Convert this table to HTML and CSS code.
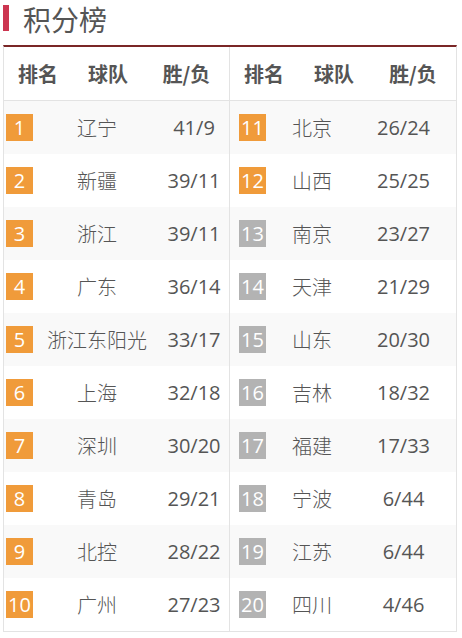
FILE: index.html
```html
<!DOCTYPE html>
<html lang="zh">
<head>
<meta charset="utf-8">
<link rel="stylesheet" href="styles.css">
</head>
<body>
<div class="title"><span class="bar"></span><h1>积分榜</h1></div>
<div class="board">
  <div class="half left">
    <div class="head"><span>排名</span><span>球队</span><span>胜/负</span></div>
    <div class="row"><span class="rank"><i class="badge hi">1</i></span><span class="team">辽宁</span><span class="score">41/9</span></div>
    <div class="row"><span class="rank"><i class="badge hi">2</i></span><span class="team">新疆</span><span class="score">39/11</span></div>
    <div class="row"><span class="rank"><i class="badge hi">3</i></span><span class="team">浙江</span><span class="score">39/11</span></div>
    <div class="row"><span class="rank"><i class="badge hi">4</i></span><span class="team">广东</span><span class="score">36/14</span></div>
    <div class="row"><span class="rank"><i class="badge hi">5</i></span><span class="team">浙江东阳光</span><span class="score">33/17</span></div>
    <div class="row"><span class="rank"><i class="badge hi">6</i></span><span class="team">上海</span><span class="score">32/18</span></div>
    <div class="row"><span class="rank"><i class="badge hi">7</i></span><span class="team">深圳</span><span class="score">30/20</span></div>
    <div class="row"><span class="rank"><i class="badge hi">8</i></span><span class="team">青岛</span><span class="score">29/21</span></div>
    <div class="row"><span class="rank"><i class="badge hi">9</i></span><span class="team">北控</span><span class="score">28/22</span></div>
    <div class="row"><span class="rank"><i class="badge hi">10</i></span><span class="team">广州</span><span class="score">27/23</span></div>
  </div>
  <div class="half right">
    <div class="head"><span>排名</span><span>球队</span><span>胜/负</span></div>
    <div class="row"><span class="rank"><i class="badge hi">11</i></span><span class="team">北京</span><span class="score">26/24</span></div>
    <div class="row"><span class="rank"><i class="badge hi">12</i></span><span class="team">山西</span><span class="score">25/25</span></div>
    <div class="row"><span class="rank"><i class="badge lo">13</i></span><span class="team">南京</span><span class="score">23/27</span></div>
    <div class="row"><span class="rank"><i class="badge lo">14</i></span><span class="team">天津</span><span class="score">21/29</span></div>
    <div class="row"><span class="rank"><i class="badge lo">15</i></span><span class="team">山东</span><span class="score">20/30</span></div>
    <div class="row"><span class="rank"><i class="badge lo">16</i></span><span class="team">吉林</span><span class="score">18/32</span></div>
    <div class="row"><span class="rank"><i class="badge lo">17</i></span><span class="team">福建</span><span class="score">17/33</span></div>
    <div class="row"><span class="rank"><i class="badge lo">18</i></span><span class="team">宁波</span><span class="score">6/44</span></div>
    <div class="row"><span class="rank"><i class="badge lo">19</i></span><span class="team">江苏</span><span class="score">6/44</span></div>
    <div class="row"><span class="rank"><i class="badge lo">20</i></span><span class="team">四川</span><span class="score">4/46</span></div>
  </div>
</div>
</body>
</html>
```
FILE: styles.css
```css
* { box-sizing: border-box; }
html, body { margin: 0; padding: 0; background: #fff; }
body {
  font-family: "Open Sans", "Noto Sans CJK SC", sans-serif;
  color: #555;
  width: 462px;
}
.title {
  height: 45px;
  display: flex;
  align-items: flex-start;
  padding-left: 3px;
}
.bar {
  display: block;
  width: 6px;
  height: 26px;
  margin-top: 5px;
  background: #cc3550;
}
.title h1 {
  margin: 0 0 0 14px;
  font-family: "Noto Sans CJK SC", sans-serif;
  font-weight: normal;
  font-size: 28px;
  line-height: 38px;
  color: #555;
}
.board {
  margin-left: 3px;
  width: 454px;
  display: flex;
  border-top: 2px solid #7a2626;
  border-left: 1px solid #e3e3e3;
  border-right: 1px solid #e3e3e3;
  border-bottom: 1px solid #e3e3e3;
}
.half { display: flex; flex-direction: column; }
.left { width: 225px; }
.right { width: 227px; border-left: 1px solid #e3e3e3; }
.head {
  height: 54px;
  border-bottom: 1px solid #e3e3e3;
  display: grid;
  grid-template-columns: 68px 72px 1fr;
  align-items: center;
  font-family: "Noto Sans CJK SC", sans-serif;
  font-weight: bold;
  font-size: 20px;
  color: #555;
  background: #fff;
}
.head span { text-align: center; }
.row {
  height: 53px;
  display: grid;
  align-items: center;
  font-size: 20px;
  color: #555;
}
.row:nth-child(even) { background: #f9f9f9; }
.left .row { grid-template-columns: 43px 100px 1fr; }
.left .rank { padding-left: 2px; }
.left .score { padding-left: 12px; }
.right .row { grid-template-columns: 47px 70px 1fr; }
.right .rank { padding-left: 9px; }
.right .score { padding-left: 4px; }
.team, .score { text-align: center; white-space: nowrap; }
.team { font-family: "Noto Sans CJK SC", sans-serif; font-weight: 300; }
.rank { display: flex; }
.badge {
  display: block;
  width: 27px;
  height: 27px;
  line-height: 27px;
  text-align: center;
  font-style: normal;
  font-size: 20px;
  color: #fff;
}
.badge.hi { background: #f09b3a; }
.badge.lo { background: #b3b3b3; }
```
